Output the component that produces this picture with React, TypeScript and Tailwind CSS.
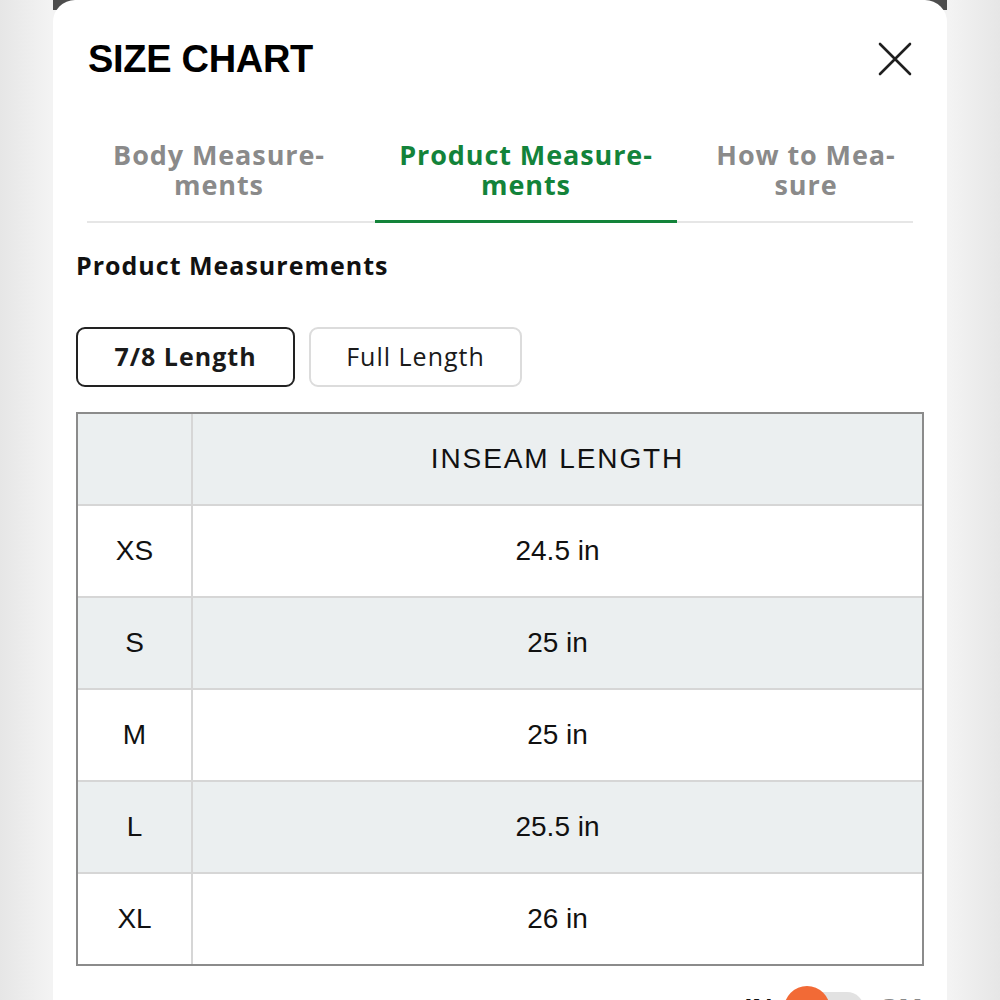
import { FC } from 'react';

const rows = [
  { size: 'XS', value: '24.5 in' },
  { size: 'S', value: '25 in' },
  { size: 'M', value: '25 in' },
  { size: 'L', value: '25.5 in' },
  { size: 'XL', value: '26 in' },
];

const tabs = [
  { label: ['Body Measure-', 'ments'], active: false, cls: 'w-[288px] pr-[24px]' },
  { label: ['Product Measure-', 'ments'], active: true, cls: 'w-[302px]' },
  { label: ['How to Mea-', 'sure'], active: false, cls: 'flex-1 pl-[22px]' },
];

const CloseIcon: FC = () => (
  <svg width="36" height="36" viewBox="0 0 36 36" fill="none">
    <path d="M3 3 L33 33 M33 3 L3 33" stroke="#1f1f1f" strokeWidth="2.6" strokeLinecap="round" />
  </svg>
);

export default function App() {
  return (
    <div className="flex h-[1000px] w-full justify-center overflow-hidden bg-[linear-gradient(90deg,#e6e6e6,#f3f3f3_5%,#f3f3f3_95%,#e6e6e6)] font-['Liberation_Sans',Arial,sans-serif]">
      <div className="w-[894px] bg-[linear-gradient(#4d4d4d_0,#4d4d4d_10px,transparent_10px)]">
        <div className="h-full rounded-t-[22px] bg-white px-[23px] pt-[40px]">
          <div className="flex items-center justify-between pl-[12px] pr-[11px]">
            <h1 className="text-[38px] font-bold leading-[38px] tracking-[-0.3px] text-black">SIZE CHART</h1>
            <CloseIcon />
          </div>

          <div className="mx-[11px] mt-[62px] flex border-b-2 border-[#e6e6e6] font-['Open_Sans',sans-serif]">
            {tabs.map((t) => (
              <div
                key={t.label[0]}
                className={`${t.cls} -mb-[2px] pb-[20px] text-center text-[27px] font-bold leading-[30px] tracking-[0.9px] ${
                  t.active ? 'border-b-[3px] border-[#13833a] text-[#13833a]' : 'border-b-[3px] border-transparent text-[#8a8a8a]'
                }`}
              >
                <div>{t.label[0]}</div>
                <div>{t.label[1]}</div>
              </div>
            ))}
          </div>

          <h2 className="mt-[30px] font-['Open_Sans',sans-serif] text-[25px] font-bold leading-[24px] tracking-[1px] text-[#111]">
            Product Measurements
          </h2>

          <div className="mt-[50px] flex gap-[14px] font-['Open_Sans',sans-serif]">
            <button className="h-[60px] w-[219px] rounded-[9px] border-2 border-[#222] text-[25px] font-bold tracking-[1px] text-[#1a1a1a]">
              7/8 Length
            </button>
            <button className="h-[60px] w-[213px] rounded-[9px] border-2 border-[#dcdcdc] text-[25px] tracking-[1px] text-[#1a1a1a]">
              Full Length
            </button>
          </div>

          <div className="mt-[25px] border-2 border-[#8b8b8b] text-[28px] text-[#111]">
            <div className="flex h-[90px] bg-[#ebeff0]">
              <div className="w-[115px] border-r-2 border-[#d6d6d6]" />
              <div className="flex flex-1 items-center justify-center tracking-[1.9px]">INSEAM LENGTH</div>
            </div>
            {rows.map((r, i) => (
              <div
                key={r.size}
                className={`flex h-[92px] border-t-2 border-[#d6d6d6] ${i % 2 === 1 ? 'bg-[#ebeff0]' : 'bg-white'}`}
              >
                <div className="flex w-[115px] items-center justify-center border-r-2 border-[#d6d6d6]">{r.size}</div>
                <div className="flex flex-1 items-center justify-center">{r.value}</div>
              </div>
            ))}
          </div>

          <div className="mt-[22px] flex items-center justify-end gap-[14px] pr-[2px] text-[28px] font-bold">
            <span className="text-[#111]">IN</span>
            <div className="relative h-[34px] w-[78px] rounded-full bg-[#e2e2e2]">
              <div className="absolute -left-[2px] -top-[6px] h-[46px] w-[46px] rounded-full bg-[#f26a36]" />
            </div>
            <span className="text-[#8a8a8a]">CM</span>
          </div>
        </div>
      </div>
    </div>
  );
}
